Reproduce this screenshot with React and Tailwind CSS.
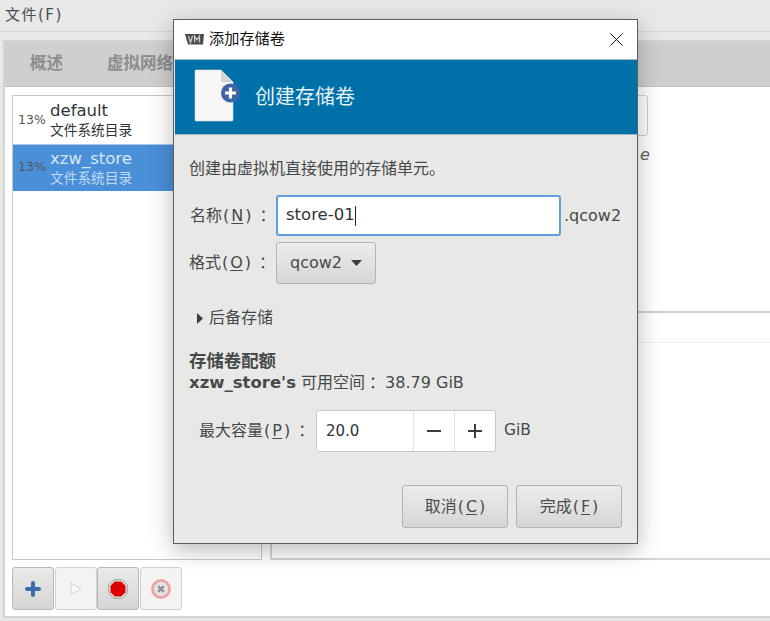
import React from "react";

// CJK label with the spaced mnemonic in brackets, e.g. 名称(N)：
const Label = ({ text, mn, colon }) => (
  <>
    {text}
    <span className="ml-[1px]">(</span>
    <span className="mx-[2px] underline underline-offset-2">{mn}</span>
    <span>)</span>
    {colon && <span className="ml-[8px]">：</span>}
  </>
);

const VmLogo = () => (
  <svg width="19" height="11" viewBox="0 0 19 11">
    <path d="M0 0h19l-1 10.500H3z" fill="#4a4a4a" />
    <path d="M3.500 2l2 6.500 2-6.500M9.500 8.500V2l2.500 4 2.500-4v6.500" stroke="#c9c9c9" strokeWidth="1.300" fill="none" />
  </svg>
);

const DocPlus = () => (
  <svg width="48" height="56" viewBox="0 0 48 56">
    <path d="M2 1h25l12 12v38a1 1 0 0 1-1 1H2a1 1 0 0 1-1-1V2a1 1 0 0 1 1-1z" fill="#f7f7f6" stroke="#dcdcdc" strokeWidth="0.600" />
    <path d="M27 1l12 12H27z" fill="#d6d6d4" />
    <circle cx="36.500" cy="24" r="9.500" fill="#3f63a6" />
    <path d="M36.500 18.500v11M31 24h11" stroke="#fff" strokeWidth="3.200" />
  </svg>
);

const ToolButton = ({ children, disabled }) => (
  <button
    className={
      disabled
        ? "w-[42px] h-[43px] rounded-[3px] border border-[#d0d0ce] bg-[#f3f3f2] flex items-center justify-center"
        : "w-[42px] h-[43px] rounded-[3px] border border-[#b8b8b6] bg-gradient-to-b from-[#eaeae9] to-[#d5d5d3] flex items-center justify-center"
    }
  >
    {children}
  </button>
);

const DialogButton = ({ children }) => (
  <button className="w-[106px] h-[43px] rounded-[3px] border border-[#b4b4b2] bg-gradient-to-b from-[#ececeb] to-[#d6d6d4] text-[#4a4d4e] text-[16px]">
    {children}
  </button>
);

const StoreRow = ({ name, selected }) => (
  <div className={selected ? "h-[47px] flex items-center pb-[1px] bg-[#4a90d9] border-t border-[#a9c8ea]" : "h-[47px] flex items-center pb-[1px]"}>
    <span className="w-[37px] pl-[5px] text-[12.500px] text-[#555]">13%</span>
    <div className="flex flex-col leading-none">
      <span className={selected ? "text-[16.500px] leading-[20px] text-[#d6e6f6]" : "text-[16.500px] leading-[20px] text-[#2e3436]"}>{name}</span>
      <span className={selected ? "text-[13.700px] leading-[18px] text-[#c3daf2]" : "text-[13.700px] leading-[18px] text-[#2e3436]"}>文件系统目录</span>
    </div>
  </div>
);

const App = () => {
  return (
    <div className="relative w-[770px] h-[621px] overflow-hidden bg-[#e8e8e7] text-[#45494a] text-[16px] font-['DejaVu_Sans','Noto_Sans_CJK_SC',sans-serif]">
      {/* main window */}
      <div className="h-[32px] flex items-center px-[5px] border-b border-[#d8d8d6] text-[15px] text-[#4a4d4e] tracking-[1.500px]">文件(F)</div>

      <div className="ml-[3px] mt-[8px] w-[780px] h-[578px] border-[2px] border-[#d4d4d2] bg-white flex flex-col">
        <div className="h-[45px] shrink-0 bg-[#cfcfcd] border-b border-[#c4c4c2] flex items-center gap-[44px] pl-[25px] font-bold text-[16.500px] text-[#8c8c8c]">
          <span>概述</span>
          <span>虚拟网络</span>
        </div>

        <div className="flex-1 flex gap-[8px] pl-[7px] pt-[8px] min-h-0">
          <div className="w-[250px] h-[465px] pt-[1px] border border-[#c8c8c6] bg-white">
            <StoreRow name="default" />
            <StoreRow name="xzw_store" selected />
          </div>

          <div className="flex-1 h-[465px] flex flex-col border-b-[2px] border-l-[2px] border-[#d4d4d2]">
            <div className="h-[218px] shrink-0 border-b-[2px] border-[#cfcfcd] pl-[360px]">
              <div className="w-[16px] h-[41px] border border-[#d0d0ce] rounded-[3px]" />
              <span className="block mt-[7px] pl-[8px] text-[16px] italic text-[#666]">e</span>
            </div>
            <div className="h-[30px] shrink-0 border-b border-[#efefee]" />
          </div>
        </div>

        <div className="h-[55px] shrink-0 flex items-start pl-[7px] pt-[6px] gap-[0.500px]">
          <ToolButton>
            <svg width="16" height="16" viewBox="0 0 16 16"><path d="M8 2v12M2 8h12" stroke="#3b6aad" strokeWidth="4" strokeLinecap="round" /></svg>
          </ToolButton>
          <ToolButton disabled>
            <svg width="12" height="14" viewBox="0 0 12 14"><path d="M1 1l10 6-10 6z" fill="#f7f7f7" stroke="#cfcfcf" /></svg>
          </ToolButton>
          <ToolButton>
            <svg width="20" height="20" viewBox="0 0 20 20">
              <path d="M6 0.700h8l5.300 5.300v8L14 19.300H6L0.700 14V6z" fill="#e6e6e4" stroke="#9c9c9a" strokeWidth="1" />
              <path d="M6.700 2.500h6.600l4.200 4.200v6.600l-4.200 4.200H6.700l-4.200-4.200V6.700z" fill="#dc0000" />
            </svg>
          </ToolButton>
          <ToolButton disabled>
            <svg width="20" height="20" viewBox="0 0 20 20">
              <circle cx="10" cy="10" r="8.600" fill="#e4e4e4" stroke="#eea3a3" strokeWidth="2.800" />
              <path d="M7.200 7.200l5.600 5.600M12.800 7.200l-5.600 5.600" stroke="#8f8f8f" strokeWidth="2.400" />
            </svg>
          </ToolButton>
        </div>
      </div>

      {/* add volume dialog */}
      <div className="absolute left-[173px] top-[19px] w-[465px] h-[525px] border border-[#5e5e5e] bg-[#e8e8e7] flex flex-col shadow-[0_6px_22px_rgba(0,0,0,0.28)]">
        <div className="h-[39px] shrink-0 bg-white flex items-center pl-[11px] text-[15.200px] text-[#111]">
          <VmLogo />
          <span className="ml-[5px]">添加存储卷</span>
          <svg className="ml-auto mr-[14px]" width="13" height="13" viewBox="0 0 13 13"><path d="M0.500 0.500l12 12M12.500 0.500l-12 12" stroke="#111" strokeWidth="1" /></svg>
        </div>

        <div className="h-[76px] shrink-0 ml-[1px] bg-[#0071a8] border-y border-[#9fb9c6] flex items-center pl-[19px] gap-[13px] text-[20px] text-[#e6f1f6]">
          <DocPlus />
          <span>创建存储卷</span>
        </div>

        <div className="flex-1 flex flex-col pl-[15px] pr-[15px]">
          <p className="mt-[24px] leading-[20px]">创建由虚拟机直接使用的存储单元。</p>

          <div className="mt-[16px] flex items-center h-[41px]">
            <span className="w-[87px] pl-[1px] whitespace-nowrap"><Label text="名称" mn="N" colon /></span>
            <div className="w-[285px] h-[41px] rounded-[3px] border-[2px] border-[#5f9de0] bg-white flex items-center pl-[8px] text-[#2e3436] text-[16.500px]">
              store-01<span className="w-px h-[20px] bg-[#222]" />
            </div>
            <span className="ml-[3px] text-[16px]">.qcow2</span>
          </div>

          <div className="mt-[6px] flex items-center h-[42px]">
            <span className="w-[87px] whitespace-nowrap"><Label text="格式" mn="O" colon /></span>
            <button className="w-[100px] h-[42px] pl-[13px] rounded-[3px] border border-[#b4b4b2] bg-gradient-to-b from-[#ececeb] to-[#d6d6d4] flex items-center gap-[9px] text-[16px]">
              qcow2
              <svg width="11" height="6" viewBox="0 0 11 6"><path d="M0 0h11L5.500 6z" fill="#3a3d3e" /></svg>
            </button>
          </div>

          <div className="mt-[23px] flex items-center pl-[8px] gap-[6px] leading-[22px]">
            <svg width="6" height="11" viewBox="0 0 6 11"><path d="M0 0l6 5.500L0 11z" fill="#3a3d3e" /></svg>
            <span>后备存储</span>
          </div>

          <p className="mt-[21px] font-bold text-[17.400px] leading-[22px]">存储卷配额</p>
          <p className="leading-[22px] whitespace-nowrap">
            <span className="font-bold text-[16.500px]">xzw_store's</span> 可用空间<span className="ml-[4px]">：</span>38.79 GiB
          </p>

          <div className="mt-[16px] flex items-center h-[42px] pl-[10px]">
            <span className="w-[117px] whitespace-nowrap"><Label text="最大容量" mn="P" colon /></span>
            <div className="w-[180px] h-[42px] rounded-[3px] border border-[#c8c8c6] bg-white flex items-stretch">
              <span className="w-[96px] pl-[9px] self-center text-[15px] text-[#2e3436]">20.0</span>
              <span className="w-[41px] border-l border-[#e2e2e0] flex items-center justify-center">
                <svg width="14" height="2" viewBox="0 0 14 2"><path d="M0 1h14" stroke="#3a3d3e" strokeWidth="2" /></svg>
              </span>
              <span className="flex-1 border-l border-[#e2e2e0] flex items-center justify-center">
                <svg width="14" height="14" viewBox="0 0 14 14"><path d="M0 7h14M7 0v14" stroke="#3a3d3e" strokeWidth="2" /></svg>
              </span>
            </div>
            <span className="ml-[8px] text-[15.500px]">GiB</span>
          </div>

          <div className="mt-[33px] flex justify-end gap-[8px]">
            <DialogButton><Label text="取消" mn="C" /></DialogButton>
            <DialogButton><Label text="完成" mn="F" /></DialogButton>
          </div>
        </div>
      </div>
    </div>
  );
};

export default App;
